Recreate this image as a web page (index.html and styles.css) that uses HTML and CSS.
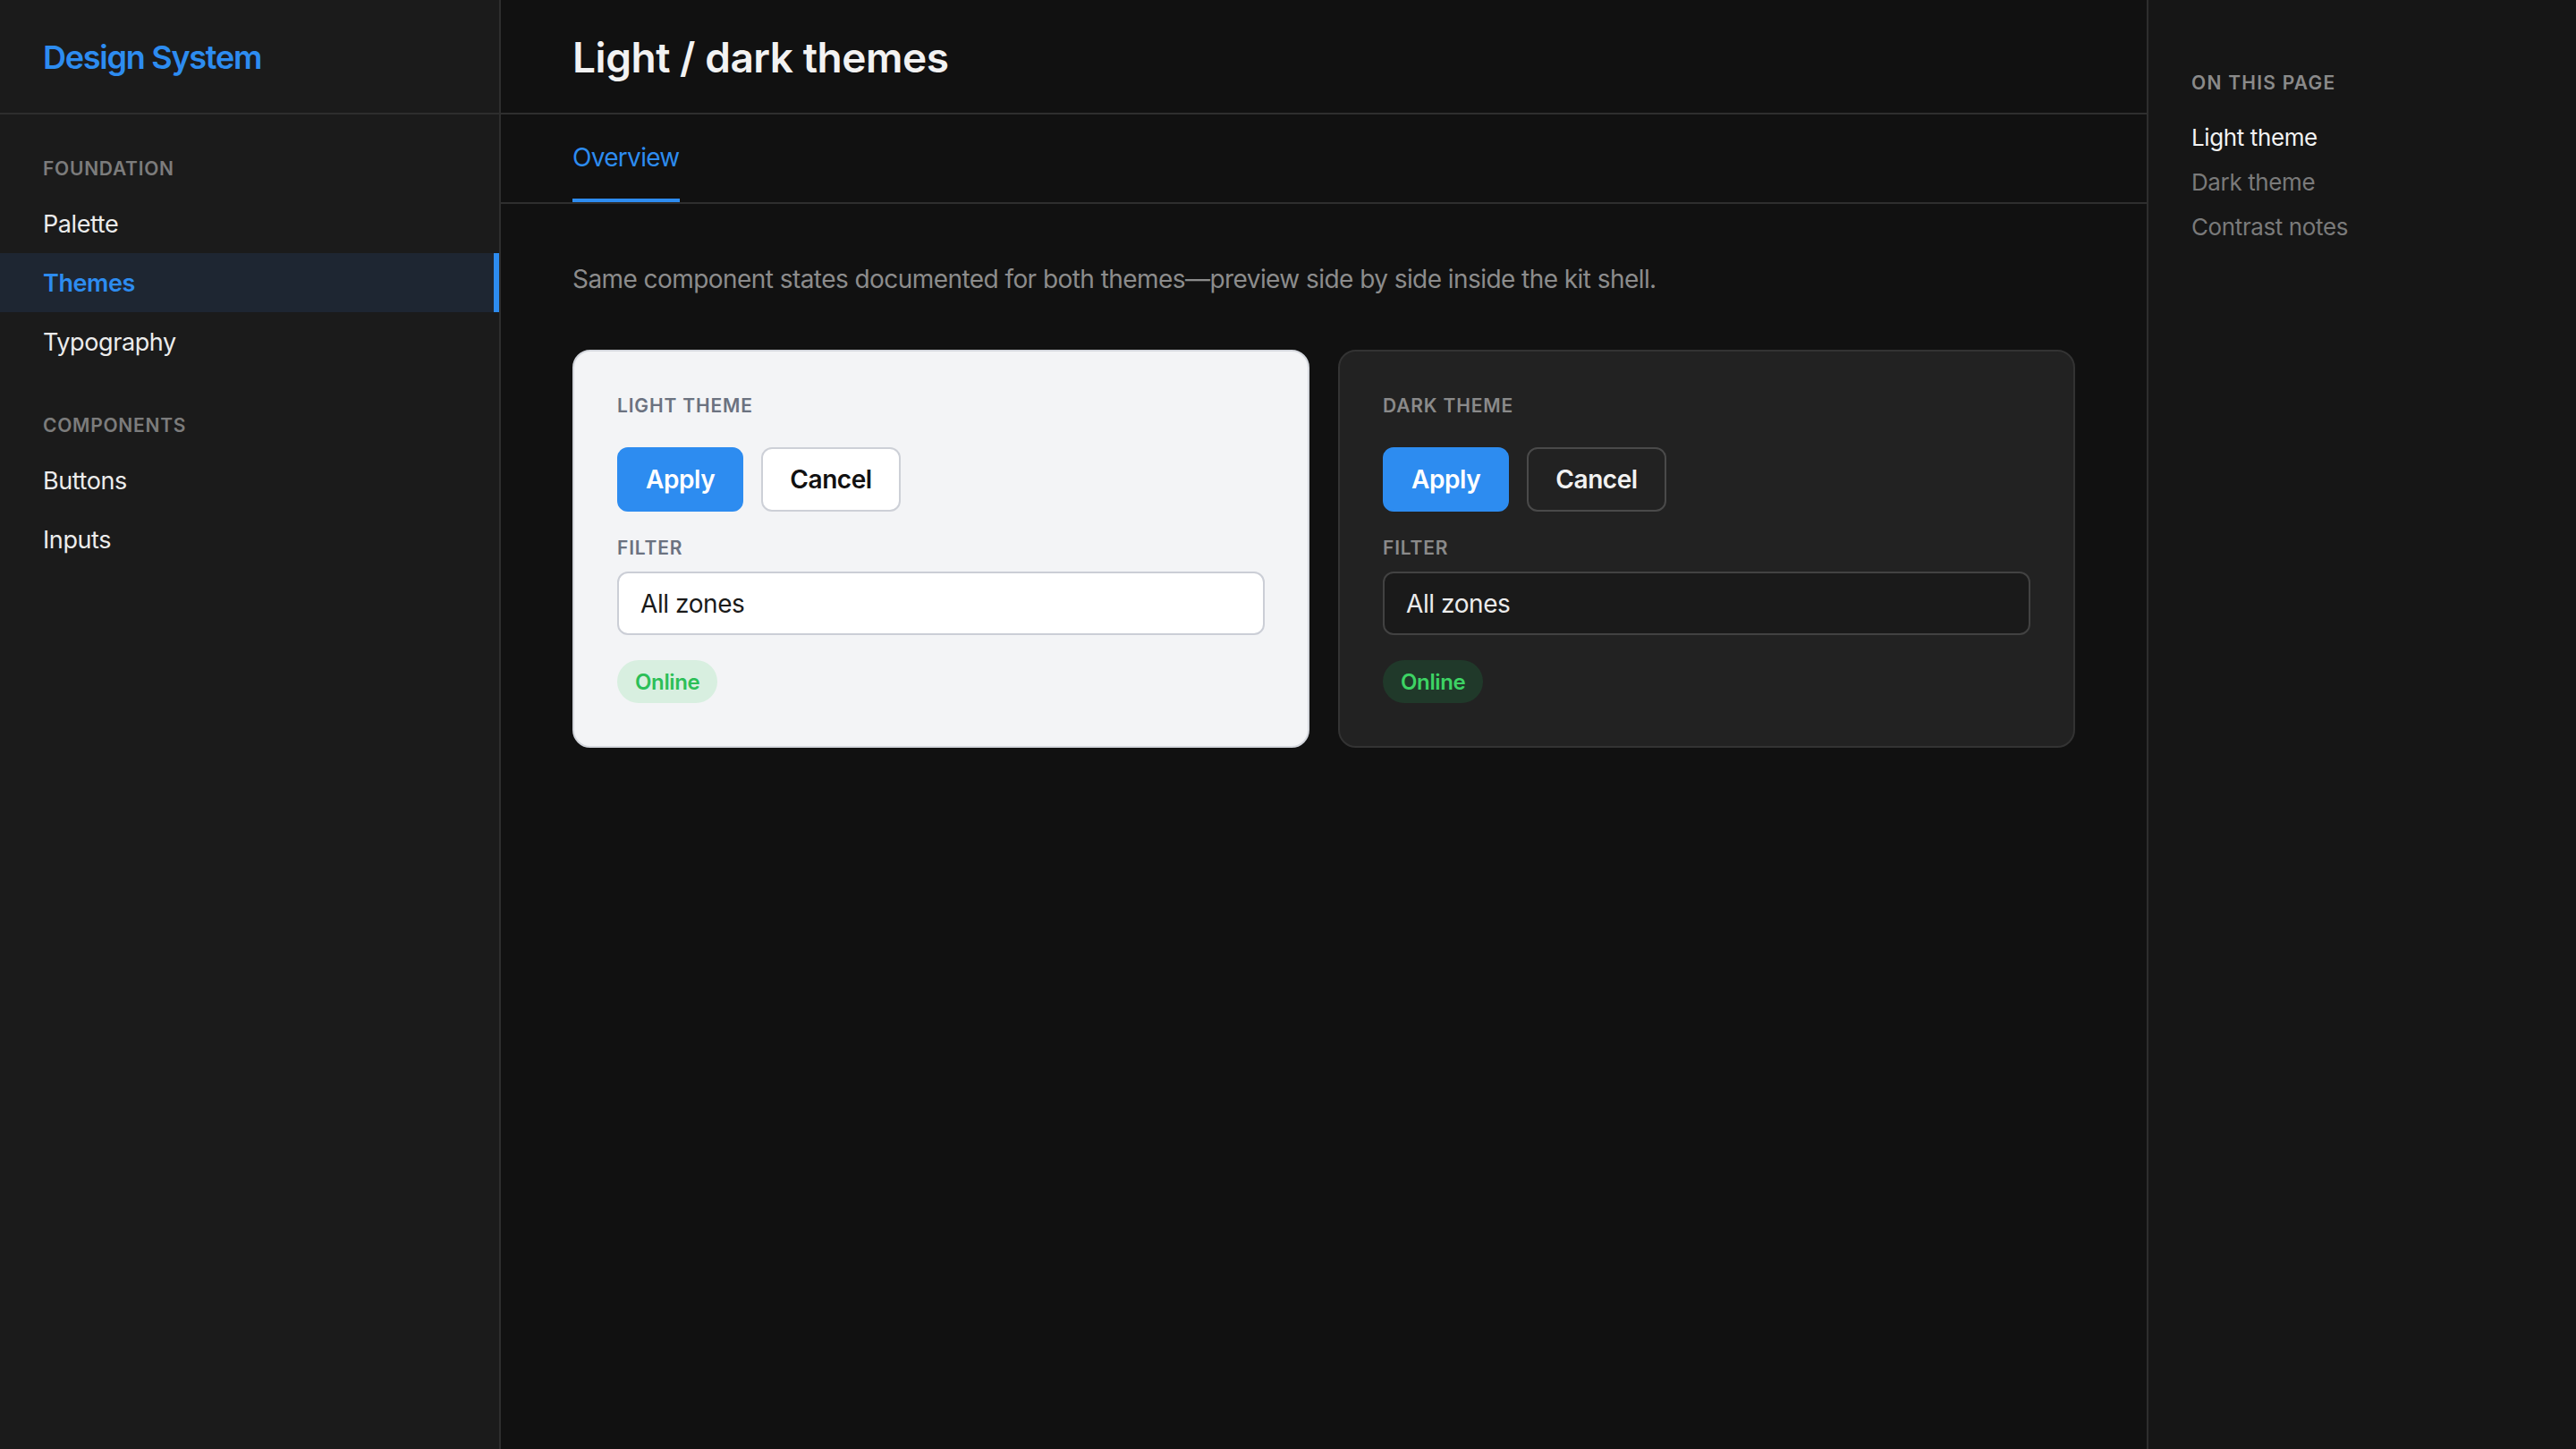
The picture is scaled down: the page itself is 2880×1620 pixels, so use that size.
FILE: index.html
```html
<!DOCTYPE html>
<html lang="en">
<head>
<meta charset="utf-8">
<title>Light / dark themes — Design System</title>
<link rel="stylesheet" href="styles.css">
</head>
<body>
<div class="app">
  <aside class="sidebar">
    <div class="brand">Design System</div>
    <nav class="nav">
      <div class="nav-section">
        <div class="nav-heading">Foundation</div>
        <a class="nav-item">Palette</a>
        <a class="nav-item active">Themes</a>
        <a class="nav-item">Typography</a>
      </div>
      <div class="nav-section">
        <div class="nav-heading">Components</div>
        <a class="nav-item">Buttons</a>
        <a class="nav-item">Inputs</a>
      </div>
    </nav>
  </aside>

  <main class="main">
    <header class="page-header">
      <h1 class="title">Light / dark themes</h1>
    </header>
    <div class="tabs">
      <a class="tab active">Overview</a>
    </div>
    <section class="content">
      <p class="lead">Same component states documented for both themes—preview side by side inside the kit shell.</p>
      <div class="cards">
        <div class="card card-light">
          <div class="card-label">Light theme</div>
          <div class="btn-row">
            <button class="btn btn-primary">Apply</button>
            <button class="btn btn-secondary">Cancel</button>
          </div>
          <div class="field-label">Filter</div>
          <div class="input">All zones</div>
          <span class="badge">Online</span>
        </div>
        <div class="card card-dark">
          <div class="card-label">Dark theme</div>
          <div class="btn-row">
            <button class="btn btn-primary">Apply</button>
            <button class="btn btn-secondary">Cancel</button>
          </div>
          <div class="field-label">Filter</div>
          <div class="input">All zones</div>
          <span class="badge">Online</span>
        </div>
      </div>
    </section>
  </main>

  <aside class="toc">
    <div class="toc-heading">On this page</div>
    <a class="toc-item current">Light theme</a>
    <a class="toc-item">Dark theme</a>
    <a class="toc-item">Contrast notes</a>
  </aside>
</div>
</body>
</html>
```

FILE: styles.css
```css
* { box-sizing: border-box; }

html, body {
  margin: 0;
  padding: 0;
  background: #111111;
  font-family: Inter, "Noto Sans", "Liberation Sans", sans-serif;
  -webkit-font-smoothing: antialiased;
}

.app {
  display: grid;
  grid-template-columns: 560px 1fr 480px;
  height: 1620px;
  overflow: hidden;
}

/* ---------- Left sidebar ---------- */
.sidebar {
  background: #1b1b1b;
  border-right: 2px solid #2e2e2e;
}

.brand {
  height: 128px;
  border-bottom: 2px solid #2e2e2e;
  display: flex;
  align-items: center;
  padding-left: 48px;
  padding-top: 2px;
  color: #2d8cf0;
  font-size: 36px;
  font-weight: 600;
  letter-spacing: -0.035em;
}

.nav {
  padding-top: 48px;
}

.nav-section + .nav-section {
  margin-top: 48px;
}

.nav-heading {
  padding-left: 48px;
  line-height: 26px;
  margin-bottom: 15px;
  font-size: 21px;
  font-weight: 600;
  letter-spacing: 0.035em;
  text-transform: uppercase;
  color: #7c7c7c;
}

.nav-item {
  display: flex;
  align-items: center;
  height: 66px;
  padding-left: 48px;
  font-size: 27px;
  letter-spacing: -0.015em;
  color: #ececec;
  cursor: pointer;
}

.nav-item.active {
  background: #1e2632;
  color: #2d8cf0;
  font-weight: 600;
  box-shadow: inset -6px 0 0 #2d8cf0;
}

/* ---------- Main ---------- */
.main {
  background: #111111;
  display: flex;
  flex-direction: column;
  min-width: 0;
}

.page-header {
  height: 128px;
  border-bottom: 2px solid #2e2e2e;
  display: flex;
  align-items: center;
  padding-left: 80px;
  padding-top: 2px;
}

.title {
  margin: 0;
  font-size: 46px;
  font-weight: 600;
  color: #f2f2f2;
  letter-spacing: -0.01em;
}

.tabs {
  height: 100px;
  border-bottom: 2px solid #2e2e2e;
  padding-left: 80px;
  display: flex;
}

.tab {
  height: 98px;
  display: flex;
  align-items: center;
  padding-top: 2px;
  border-bottom: 4px solid #2d8cf0;
  font-size: 28px;
  letter-spacing: -0.025em;
  color: #2d8cf0;
  cursor: pointer;
}

.content {
  padding: 64px 80px;
}

.lead {
  margin: 0 0 59px;
  font-size: 28px;
  line-height: 40px;
  letter-spacing: -0.02em;
  color: #8c8c8c;
}

.cards {
  display: grid;
  grid-template-columns: 1fr 1fr;
  gap: 32px;
}

.card {
  border: 2px solid;
  border-radius: 20px;
  padding: 48px;
  display: flex;
  flex-direction: column;
  align-items: flex-start;
}

.card-label,
.field-label {
  font-size: 21px;
  line-height: 26px;
  font-weight: 600;
  letter-spacing: 0.04em;
  text-transform: uppercase;
}

.btn-row {
  margin-top: 33px;
  display: flex;
  gap: 20px;
}

.btn {
  height: 72px;
  padding: 0 30px;
  border: 2px solid transparent;
  border-radius: 12px;
  font-family: inherit;
  font-size: 28px;
  font-weight: 600;
  letter-spacing: -0.015em;
  cursor: pointer;
}

.btn-primary {
  background: #2d8cf0;
  border-color: #2d8cf0;
  color: #ffffff;
}

.field-label {
  margin-top: 28px;
}

.input {
  margin-top: 13px;
  width: 100%;
  height: 71px;
  border: 2px solid;
  border-radius: 12px;
  padding: 0 24px;
  display: flex;
  align-items: center;
  font-size: 28px;
  letter-spacing: -0.015em;
}

.badge {
  margin-top: 28px;
  height: 48px;
  padding: 0 20px;
  border-radius: 24px;
  display: inline-flex;
  align-items: center;
  font-size: 24px;
  font-weight: 600;
  letter-spacing: -0.015em;
}

/* light variant */
.card-light {
  background: #f3f4f6;
  border-color: #d4d7dd;
}
.card-light .card-label,
.card-light .field-label { color: #6b7280; }
.card-light .btn-secondary {
  background: #ffffff;
  border-color: #cdd0d7;
  color: #111111;
}
.card-light .input {
  background: #ffffff;
  border-color: #cbced6;
  color: #1a1a1a;
}
.card-light .badge {
  background: #d8efe0;
  color: #2cbf57;
}

/* dark variant */
.card-dark {
  background: #222222;
  border-color: #333333;
}
.card-dark .card-label,
.card-dark .field-label { color: #8a8a8a; }
.card-dark .btn-secondary {
  background: #222222;
  border-color: #4a4a4a;
  color: #f2f2f2;
}
.card-dark .input {
  background: #1a1a1a;
  border-color: #424242;
  color: #ececec;
}
.card-dark .badge {
  background: #20392a;
  color: #3dd364;
}

/* ---------- Right TOC ---------- */
.toc {
  background: #161616;
  border-left: 2px solid #2e2e2e;
  padding: 80px 48px;
  display: flex;
  flex-direction: column;
}

.toc-heading {
  font-size: 21px;
  line-height: 26px;
  font-weight: 600;
  letter-spacing: 0.06em;
  text-transform: uppercase;
  color: #8a8a8a;
  margin-bottom: 23px;
}

.toc-item {
  font-size: 26px;
  line-height: 50px;
  letter-spacing: -0.015em;
  color: #7a7a7a;
  cursor: pointer;
}

.toc-item.current {
  color: #f2f2f2;
}
```
